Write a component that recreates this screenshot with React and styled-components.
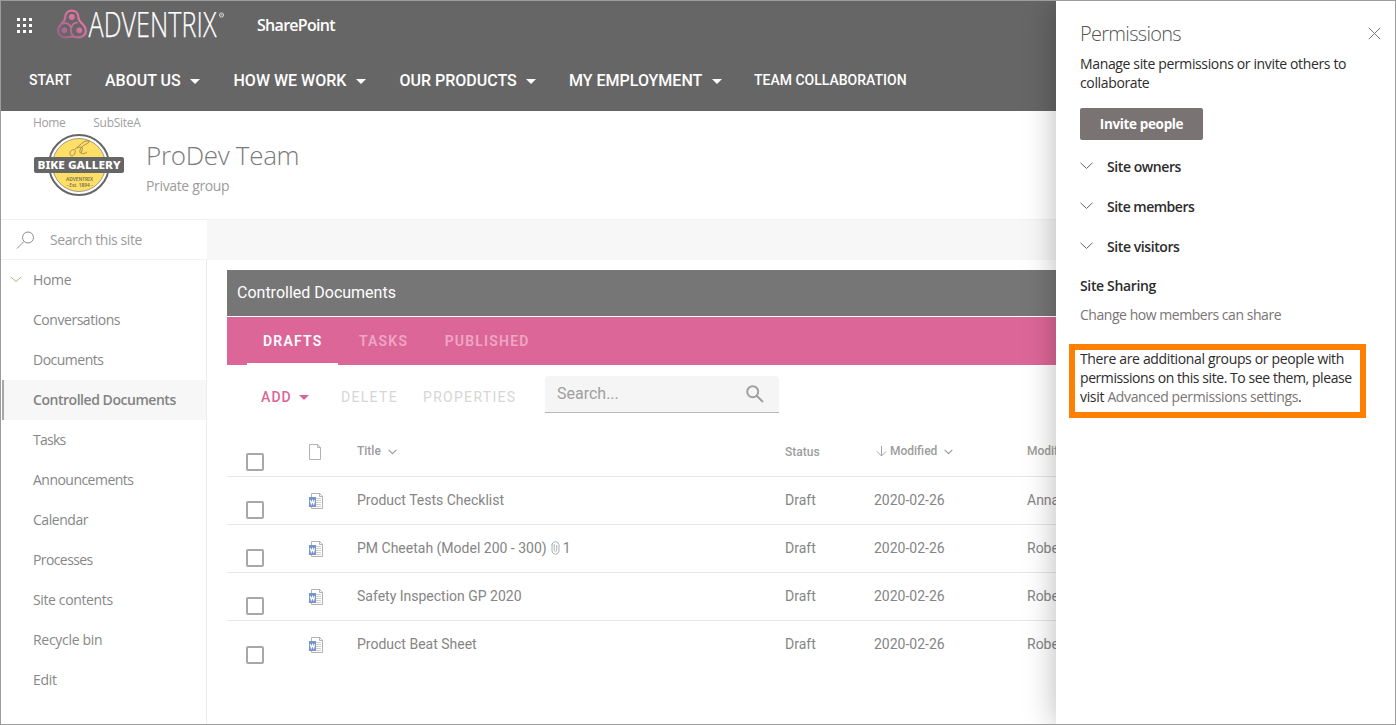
import React from "react";
import styled, { createGlobalStyle } from "styled-components";

const GlobalStyle = createGlobalStyle`
  *, *::before, *::after { box-sizing: border-box; }
  body { margin: 0; background: #fff; font-family: "Open Sans", "Noto Sans", sans-serif; }
  button { font: inherit; border: 0; background: none; padding: 0; }
`;

const Frame = styled.div`
  position: relative;
  width: 1396px;
  height: 725px;
  border: 1px solid #9c9c9c;
  overflow: hidden;
  background: #fff;
`;

const T = styled.span`
  display: block;
  white-space: nowrap;
  letter-spacing: ${(p) => p.$ls || 0}px;
`;

/* ---------- header ---------- */
const Header = styled.header`
  height: 110px;
  background: #666;
  color: #fff;
`;

const SuiteBar = styled.div`
  display: flex;
  align-items: center;
  height: 49px;
  padding-left: 15px;
`;

const Waffle = styled.div`
  display: grid;
  grid-template-columns: repeat(3, 4px);
  gap: 2px;
  width: 16px;
  margin-right: 25px;
`;

const Dot = styled.i`
  width: 3px;
  height: 3px;
  margin: 0 0 1px 1px;
  background: #fff;
`;

const BrandSvg = styled.svg`
  display: block;
  width: 168px;
  height: 34px;
  overflow: visible;
`;

const AppName = styled(T)`
  margin-left: 32px;
  padding-bottom: 1px;
  font-size: 16px;
  font-weight: 600;
`;

const Nav = styled.nav`
  display: flex;
  align-items: center;
  height: 61px;
  padding-left: 28px;
  font-family: Roboto, sans-serif;
  font-weight: 500;
`;

const NavItem = styled.a`
  display: flex;
  align-items: center;
  flex: none;
  width: ${(p) => p.$w}px;
  padding-bottom: ${(p) => (p.$menu ? 0 : 2)}px;
  font-size: ${(p) => (p.$menu ? 16 : 14)}px;
`;

const Caret = styled.i`
  width: 0;
  height: 0;
  margin-left: ${(p) => p.$gap || 9.5}px;
  margin-top: ${(p) => p.$drop || 1}px;
  border: 5px solid transparent;
  border-top-color: currentColor;
  border-bottom: 0;
`;

/* ---------- site heading ---------- */
const SiteHead = styled.section`
  height: 109px;
  border-bottom: 1px solid #f1f1f1;
`;

const Crumbs = styled.div`
  display: flex;
  gap: 28px;
  height: 23px;
  padding: 3px 0 0 32px;
  font-size: 12px;
  line-height: 18px;
  color: #a0a0a0;
`;

const Identity = styled.div`
  display: flex;
  padding-left: 32px;
`;

const SiteLogo = styled.svg`
  width: 92px;
  height: 64px;
  margin-right: 21px;
`;

const SiteName = styled(T)`
  padding-top: 2px;
  font-size: 26px;
  font-weight: 300;
  line-height: 38px;
  color: #7b7b7b;
`;

const SiteKind = styled(T)`
  margin-top: 2px;
  font-size: 14px;
  line-height: 20px;
  color: #9b9b9b;
`;

/* ---------- body ---------- */
const Body = styled.div`
  display: grid;
  grid-template-columns: 206px 1fr;
  grid-template-rows: 40px 465px;
`;

const SiteSearch = styled.div`
  display: flex;
  align-items: center;
  padding-left: 14px;
  border-bottom: 1px solid #f3f3f3;
  color: #9b9b9b;
  font-size: 14px;
  svg { margin-right: 15px; }
`;

const CommandStrip = styled.div`
  background: #f7f7f7;
`;

const SideNav = styled.nav`
  border-right: 1px solid #ededed;
`;

const SideItem = styled.a`
  display: flex;
  align-items: center;
  height: 40px;
  padding: 0 0 1px ${(p) => (p.$open ? 9 : 32)}px;
  font-size: 14px;
  font-weight: ${(p) => (p.$active ? 600 : 400)};
  color: ${(p) => (p.$active ? "#838383" : "#878787")};
  background: ${(p) => (p.$active ? "#f7f7f7" : "transparent")};
  box-shadow: ${(p) => (p.$active ? "inset 1px 0 #fff, inset 3px 0 #a9a7a6" : "none")};
  svg { margin-right: 11px; }
`;

const Main = styled.main`
  padding: 10px 0 0 20px;
  font-family: Roboto, sans-serif;
`;

const PartTitle = styled.div`
  height: 46px;
  padding-left: 10px;
  background: #767676;
  color: #fff;
  font-size: 16px;
  line-height: 45px;
`;

const Tabs = styled.div`
  display: flex;
  height: 48px;
  margin-top: 1px;
  padding-left: 20px;
  background: #dd6698;
`;

const Tab = styled.div`
  padding: 0 16px;
  margin-right: 4.5px;
  border-bottom: 2px solid ${(p) => (p.$active ? "#fff" : "transparent")};
  color: ${(p) => (p.$active ? "#fff" : "#eda7c5")};
  font-size: 14px;
  font-weight: 600;
  line-height: 48px;
`;

const Toolbar = styled.div`
  display: flex;
  height: 64px;
  padding: 11px 0 0 34px;
  font-size: 14px;
`;

const Command = styled.button`
  display: flex;
  align-items: center;
  justify-content: flex-start;
  height: 42px;
  flex: none;
  width: ${(p) => p.$w}px;
  font-weight: ${(p) => (p.$primary ? 500 : 400)};
  color: ${(p) => (p.$primary ? "#da6597" : "#d6d6d6")};
`;

const ListSearch = styled.div`
  display: flex;
  align-items: center;
  justify-content: space-between;
  width: 234px;
  height: 37px;
  padding: 0 15px 2px 12px;
  border-radius: 4px 4px 0 0;
  border-bottom: 1px solid #b8b8b8;
  background: #f5f5f5;
  color: #a0a0a0;
  font-size: 16px;
  svg { margin-top: 2px; }
`;

const Row = styled.div`
  display: grid;
  grid-template-columns: 19px 63px 48px 428px 89px 153px 1fr;
  align-items: center;
  height: 48px;
  border-bottom: ${(p) => (p.$last ? "0" : "1px solid #e6e6e6")};
  color: #858585;
  font-size: 14px;
`;

const HeadRow = styled(Row)`
  color: #9d9d9d;
  font-size: 12px;
  font-weight: 500;
`;

const Check = styled.i`
  grid-column: 2;
  width: 18px;
  height: 18px;
  margin-top: ${(p) => p.$drop || 19}px;
  border: 2px solid #a8a8ac;
  border-radius: 2px;
`;

const Cell = styled.div`
  display: flex;
  align-items: center;
  white-space: nowrap;
  padding-top: ${(p) => p.$drop || 0}px;
  padding-bottom: ${(p) => p.$lift || 0}px;
`;

/* ---------- permissions panel ---------- */
const Panel = styled.aside`
  position: absolute;
  top: 0;
  right: 0;
  width: 339px;
  height: 723px;
  padding: 20px 0 0 24px;
  background: #fff;
  box-shadow: 0 0 30px rgba(0, 0, 0, 0.28);
  color: #2c2c2c;
  font-size: 14px;
  line-height: 19px;
`;

const PanelHead = styled.div`
  display: flex;
  justify-content: space-between;
  height: 33px;
  padding-right: 14px;
  svg { margin-top: 6px; }
`;

const PanelTitle = styled(T)`
  font-size: 20px;
  font-weight: 300;
  line-height: 25px;
  color: #555;
`;

const Invite = styled.button`
  display: flex;
  align-items: center;
  justify-content: center;
  width: 123px;
  height: 32px;
  margin: 16px 0 9px;
  border-radius: 2px;
  background: #7a7374;
  color: #fff;
  font-size: 13.5px;
  font-weight: 700;
`;

const Group = styled.div`
  display: flex;
  align-items: center;
  gap: 14px;
  height: 40px;
  padding-bottom: 5px;
  font-weight: 600;
  svg { margin-top: -2px; }
`;

const SubHead = styled(T)`
  margin-top: 7px;
  font-weight: 600;
`;

const Link = styled(T)`
  display: ${(p) => (p.$inline ? "inline" : "block")};
  color: #7a7574;
`;

const ShareLink = styled(Link)`
  margin-top: 10px;
`;

const Callout = styled.div`
  width: 297px;
  height: 74px;
  margin: 20px 0 0 -11px;
  padding: 0 0 0 5px;
  border: 6px solid #ff8000;
  line-height: 19px;
  > :first-child { margin-top: -1px; }
`;

/* ---------- drawings ---------- */
const Chevron = ({ w = 12, h = 6, color = "#666", sw = 1 }) => (
  <svg width={w + 1} height={h + 2} viewBox={`0 0 ${w + 1} ${h + 2}`} fill="none" stroke={color} strokeWidth={sw}>
    <path d={`M.5 .8 L${w / 2 + 0.5} ${h + 0.5} L${w + 0.5} .8`} />
  </svg>
);

const SmallChevron = styled.svg`
  width: 9px;
  height: 6px;
  margin: 3px 0 0 7px;
  fill: none;
  stroke: #9d9d9d;
  stroke-width: 1.2;
`;

const HeadChevron = () => (
  <SmallChevron viewBox="0 0 9 6">
    <path d="M.7 .8 L4.5 4.6 L8.3 .8" />
  </SmallChevron>
);

const Brand = () => (
  <BrandSvg viewBox="0 0 168 34">
    <defs>
      <linearGradient id="brand" gradientUnits="userSpaceOnUse" x1="1" y1="26" x2="18" y2="10">
        <stop offset="0" stopColor="#96618a" />
        <stop offset="1" stopColor="#e0729f" />
      </linearGradient>
    </defs>
    <g fill="none" stroke="url(#brand)" strokeWidth="2.2" strokeLinejoin="round">
      <path d="M8.200 8.500 C8.200 -.7 21.400 -.7 21.400 8.500 C21.400 13.500 28.800 15.500 28.800 21.800 C28.800 27.500 22.500 29 18.500 28 C16 27.500 13.500 27.500 11 28 C7 29 1.100 27.500 1.100 21.800 C1.100 15.500 8.200 13.500 8.200 8.500Z" />
      <path d="M6 14.800 C9.500 13 13.700 16 14.200 19 M20.500 13.500 C17.500 13.500 15 16 14.200 19 C13 22.500 14.500 25 16.500 27" strokeWidth="1.7" />
    </g>
    <g fill="url(#brand)">
      <circle cx="14.800" cy="8" r="2.900" />
      <circle cx="7.300" cy="21.300" r="2.900" />
      <circle cx="22.300" cy="21.300" r="2.900" />
    </g>
    <text x="31.500" y="28" fill="#fff" stroke="#fff" strokeWidth=".25" fontFamily="Open Sans" fontWeight="300" fontSize="34" textLength="128" lengthAdjust="spacingAndGlyphs">ADVENTRIX</text>
    <g fill="none" stroke="#ddd" strokeWidth=".9">
      <circle cx="164.500" cy="6" r="2.100" />
      <path d="M164 7.200V5h.7q.6.500 0 1l.6 1.200" strokeWidth=".5" />
    </g>
  </BrandSvg>
);

const Badge = () => (
  <SiteLogo viewBox="0 0 92 64">
    <circle cx="46" cy="31" r="30" fill="#fff" stroke="#666" strokeWidth="2" />
    <circle cx="46" cy="31" r="26.500" fill="#ffdf66" stroke="#777" strokeWidth=".7" />
    <g fill="none" stroke="#8a7b4e" strokeWidth=".8">
      <path d="M37 19c1-5 7-4 5 0s-5 4-5 0M42 15c5-3 8-9 14-8 1 3-7 3-9 9-1 4 3 5 7 2M44 14c5-2 7-1 4 5" />
    </g>
    <rect x="1" y="23" width="90" height="16" rx="2" fill="#666" />
    <g fontFamily="Noto Sans, Open Sans" textAnchor="middle">
      <text x="46" y="35" fill="#fff" fontSize="11" fontWeight="800" textLength="83" lengthAdjust="spacingAndGlyphs">BIKE GALLERY</text>
      <text x="46.500" y="47" fill="#777052" fontSize="4.800" fontWeight="600" textLength="27" lengthAdjust="spacingAndGlyphs">ADVENTRIX</text>
      <text x="46.500" y="53" fill="#777052" fontSize="4.800" fontWeight="600" textLength="26" lengthAdjust="spacingAndGlyphs">- Est. 1894 -</text>
    </g>
  </SiteLogo>
);

const WordFile = () => (
  <svg width="15" height="17" viewBox="0 0 15 17">
    <path d="M2.500 .5h8.200l2.800 2.800v12.200h-11z" fill="#fff" stroke="#b2b2b2" />
    <path d="M10.500 .5v3H13.500" fill="none" stroke="#b2b2b2" />
    <path d="M7 5.500h5M7 7.500h5M7 9.500h5M7 11.500h5M5 13.500h7" stroke="#d0d0d0" />
    <path d="M0 4h7v10H0z" fill="#7795c9" />
    <path d="M1.200 7.200l1.100 3.800 1.200-3.300 1.200 3.300 1.100-3.800" fill="none" stroke="#fff" strokeWidth="1.100" />
  </svg>
);

const BlankFile = () => (
  <svg width="13" height="17" viewBox="0 0 13 17" fill="none" stroke="#b2b2b2">
    <path d="M.5 .5h8.200l2.800 2.800v12.200H.5z" />
    <path d="M8.500 .5v3h3" />
  </svg>
);

const ClipSvg = styled.svg`
  margin: 1px 3px 0 4px;
`;

const Clip = () => (
  <ClipSvg width="9" height="14" viewBox="0 0 9 14" fill="none" stroke="#aab2b8">
    <path d="M5.800 4v5.500q-1.300 2.200-2.600 0V3M1 4.500v-1Q1.500.7 4.500.7T8 3.500v6.500q-.5 3.300-3.500 3.300T1 10V3.500" />
  </ClipSvg>
);

const Glass = () => (
  <svg width="20" height="20" viewBox="0 0 20 20" fill="none" stroke="#8d8d8d" strokeWidth="1">
    <circle cx="13" cy="7.500" r="5.500" />
    <path d="M9 11.500 2 18.500" />
  </svg>
);

const BoldGlass = () => (
  <svg width="18" height="18" viewBox="0 0 18 18" fill="none" stroke="#a0a0a0" strokeWidth="2">
    <circle cx="6.700" cy="6.700" r="5.500" />
    <path d="M10.700 10.700 17 17" />
  </svg>
);

/* ---------- data ---------- */
const nav = [
  ["START", 76, false],
  ["ABOUT US", 128.5, true],
  ["HOW WE WORK", 166, true],
  ["OUR PRODUCTS", 169.5, true],
  ["MY EMPLOYMENT", 185, true],
  ["TEAM COLLABORATION", 160, false],
];

const side = [
  ["Conversations", -0.46],
  ["Documents", -0.5],
  ["Controlled Documents", -0.46, true],
  ["Tasks", -0.75],
  ["Announcements", -0.53],
  ["Calendar", -0.45],
  ["Processes", -0.6],
  ["Site contents", -0.37],
  ["Recycle bin", -0.3],
  ["Edit", -0.3],
];

const docs = [
  { title: "Product Tests Checklist", by: "Anna" },
  { title: "PM Cheetah (Model 200 - 300)", by: "Robert", files: 1 },
  { title: "Safety Inspection GP 2020", by: "Robert" },
  { title: "Product Beat Sheet", by: "Robert" },
];

export default function App() {
  return (
    <>
      <GlobalStyle />
      <Frame>
        <Header>
          <SuiteBar>
            <Waffle>
              {Array.from({ length: 9 }, (_, i) => <Dot key={i} />)}
            </Waffle>
            <Brand />
            <AppName $ls={-0.7}>SharePoint</AppName>
          </SuiteBar>
          <Nav>
            {nav.map(([label, w, menu]) => (
              <NavItem key={label} $w={w} $menu={menu}>
                <T>{label}</T>
                {menu && <Caret />}
              </NavItem>
            ))}
          </Nav>
        </Header>

        <SiteHead>
          <Crumbs>
            <T $ls={-0.4}>Home</T>
            <T $ls={-0.3}>SubSiteA</T>
          </Crumbs>
          <Identity>
            <Badge />
            <div>
              <SiteName $ls={-0.3}>ProDev Team</SiteName>
              <SiteKind $ls={-0.35}>Private group</SiteKind>
            </div>
          </Identity>
        </SiteHead>

        <Body>
          <SiteSearch>
            <Glass />
            <T $ls={-0.4}>Search this site</T>
          </SiteSearch>
          <CommandStrip />
          <SideNav>
            <SideItem $open>
              <Chevron w={11} h={5} color="#c9a98a" />
              <T $ls={-0.35}>Home</T>
            </SideItem>
            {side.map(([label, ls, active]) => (
              <SideItem key={label} $active={active}>
                <T $ls={ls}>{label}</T>
              </SideItem>
            ))}
          </SideNav>

          <Main>
            <PartTitle><T>Controlled Documents</T></PartTitle>
            <Tabs>
              <Tab $active><T $ls={1.2}>DRAFTS</T></Tab>
              <Tab><T $ls={1.2}>TASKS</T></Tab>
              <Tab><T $ls={1.2}>PUBLISHED</T></Tab>
            </Tabs>
            <Toolbar>
              <Command $primary $w={80}><T $ls={1.1}>ADD</T><Caret $gap={7} /></Command>
              <Command $w={82}><T $ls={1.3}>DELETE</T></Command>
              <Command $w={122}><T $ls={1.3}>PROPERTIES</T></Command>
              <ListSearch>
                <T>Search...</T>
                <BoldGlass />
              </ListSearch>
            </Toolbar>

            <HeadRow>
              <Check />
              <Cell $lift={1}><BlankFile /></Cell>
              <Cell $lift={4}><T>Title</T><HeadChevron /></Cell>
              <Cell $lift={2}><T>Status</T></Cell>
              <Cell $lift={4}>
                <svg width="16" height="12" viewBox="0 0 16 12" fill="none" stroke="#a5a5a5">
                  <path d="M7.500 1v10M2.800 6.300 7.500 11l4.700-4.700" />
                </svg>
                <T>Modified</T><HeadChevron />
              </Cell>
              <Cell $lift={4}><T>Modified By</T></Cell>
            </HeadRow>
            {docs.map((d, i) => (
              <Row key={d.title} $last={i === docs.length - 1}>
                <Check $drop={i === docs.length - 1 ? 20 : 19} />
                <Cell $drop={1}><WordFile /></Cell>
                <Cell $lift={2}>
                  <T>{d.title}</T>
                  {d.files && <><Clip /><T>{d.files}</T></>}
                </Cell>
                <Cell $lift={2}><T>Draft</T></Cell>
                <Cell $lift={2}><T>2020-02-26</T></Cell>
                <Cell $lift={2}><T>{d.by}</T></Cell>
              </Row>
            ))}
          </Main>
        </Body>

        <Panel>
          <PanelHead>
            <PanelTitle $ls={-0.7}>Permissions</PanelTitle>
            <svg width="13" height="13" viewBox="0 0 13 13" stroke="#777" fill="none">
              <path d="M.8 .8l11.400 11.400M12.200 .8.8 12.200" />
            </svg>
          </PanelHead>
          <T $ls={-0.36}>Manage site permissions or invite others to</T>
          <T $ls={-0.36}>collaborate</T>
          <Invite><T $ls={-0.35}>Invite people</T></Invite>
          <Group><Chevron /><T $ls={-0.42}>Site owners</T></Group>
          <Group><Chevron /><T $ls={-0.5}>Site members</T></Group>
          <Group><Chevron /><T $ls={-0.42}>Site visitors</T></Group>
          <SubHead $ls={-0.35}>Site Sharing</SubHead>
          <ShareLink $ls={-0.46}>Change how members can share</ShareLink>
          <Callout>
            <T $ls={-0.35}>There are additional groups or people with</T>
            <T $ls={-0.43}>permissions on this site. To see them, please</T>
            <T $ls={-0.33}>visit <Link $inline $ls={-0.37}>Advanced permissions settings</Link>.</T>
          </Callout>
        </Panel>
      </Frame>
    </>
  );
}
